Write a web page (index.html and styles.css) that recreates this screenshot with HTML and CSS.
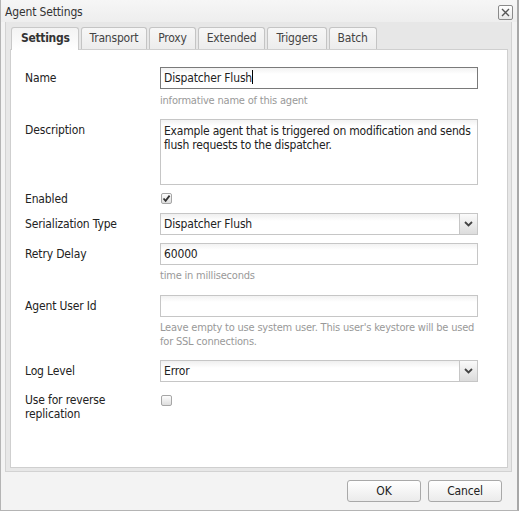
FILE: index.html
```html
<!DOCTYPE html>
<html>
<head>
<meta charset="utf-8">
<title>Agent Settings</title>
<link rel="stylesheet" href="styles.css">
</head>
<body>
<div class="dialog">
  <div class="titlebar">
    <span class="title">Agent Settings</span>
    <span class="close"><svg width="11" height="11" viewBox="0 0 11 11"><path d="M2 2 L9 9 M9 2 L2 9" stroke="#555" stroke-width="1.4"/></svg></span>
  </div>
  <div class="tabpanel">
    <div class="tabs">
      <span class="tab active">Settings</span>
      <span class="tab">Transport</span>
      <span class="tab">Proxy</span>
      <span class="tab">Extended</span>
      <span class="tab">Triggers</span>
      <span class="tab">Batch</span>
    </div>
    <div class="content">
      <div class="row r-name">
        <div class="label">Name</div>
        <div class="field">
          <div class="input focused">Dispatcher Flush<span class="caret"></span></div>
          <div class="hint">informative name of this agent</div>
        </div>
      </div>
      <div class="row r-desc">
        <div class="label">Description</div>
        <div class="field">
          <div class="textarea">Example agent that is triggered on modification and sends flush requests to the dispatcher.</div>
        </div>
      </div>
      <div class="row r-check">
        <div class="label">Enabled</div>
        <div class="field"><span class="checkbox checked"><svg width="9" height="9" viewBox="0 0 9 9"><path d="M1.5 4.5 L3.6 6.8 L7.6 1.6" stroke="#333" stroke-width="1.8" fill="none"/></svg></span></div>
      </div>
      <div class="row r-ser">
        <div class="label">Serialization Type</div>
        <div class="field">
          <div class="select"><span class="val">Dispatcher Flush</span><span class="arrow"><svg width="9" height="6" viewBox="0 0 9 6"><path d="M1 1 L4.5 4.5 L8 1" stroke="#444" stroke-width="1.8" fill="none"/></svg></span></div>
        </div>
      </div>
      <div class="row r-retry">
        <div class="label">Retry Delay</div>
        <div class="field">
          <div class="input">60000</div>
          <div class="hint">time in milliseconds</div>
        </div>
      </div>
      <div class="row r-user">
        <div class="label">Agent User Id</div>
        <div class="field">
          <div class="input"></div>
          <div class="hint">Leave empty to use system user. This user's keystore will be used for SSL connections.</div>
        </div>
      </div>
      <div class="row r-log">
        <div class="label">Log Level</div>
        <div class="field">
          <div class="select"><span class="val">Error</span><span class="arrow"><svg width="9" height="6" viewBox="0 0 9 6"><path d="M1 1 L4.5 4.5 L8 1" stroke="#444" stroke-width="1.8" fill="none"/></svg></span></div>
        </div>
      </div>
      <div class="row r-rev">
        <div class="label small-lh">Use for reverse replication</div>
        <div class="field"><span class="checkbox cb-rev"></span></div>
      </div>
    </div>
  </div>
  <div class="footer">
    <span class="btn">OK</span>
    <span class="btn">Cancel</span>
  </div>
</div>
</body>
</html>
```
FILE: styles.css
```css
html, body {
  margin: 0;
  padding: 0;
  background: #f3f3f3;
}
body {
  font-family: "DejaVu Sans Condensed", "DejaVu Sans", sans-serif;
  font-size: 12px;
  letter-spacing: -0.15px;
  color: #333;
}
.dialog {
  box-sizing: border-box;
  width: 519px;
  height: 511px;
  border: 1px solid #b4b4b4;
  border-right: 2px solid #a8a8a8;
  border-top: none;
  background: #f3f3f3;
  display: flex;
  flex-direction: column;
}
.titlebar {
  height: 22px;
  display: flex;
  align-items: center;
  justify-content: space-between;
  padding: 0 4px 0 4px;
  background: linear-gradient(#f6f6f6, #eeeeee);
}
.title {
  font-size: 12px;
  color: #333;
  position: relative;
  top: 1px;
}
.close {
  width: 13px;
  height: 13px;
  border: 1px solid #8a8a8a;
  border-radius: 2px;
  background: linear-gradient(#ffffff, #e8e8e8);
  display: flex;
  align-items: center;
  justify-content: center;
  margin-top: 2px;
}
.tabpanel {
  margin: 0 5px 0 4px;
  border: 1px solid #d2d2d2;
  border-top: none;
  background: #e7e7e7;
  padding: 0 3px 3px 4px;
  height: 450px;
  box-sizing: border-box;
  display: flex;
  flex-direction: column;
}
.tabs {
  display: flex;
  gap: 2px;
  padding: 5px 0 0 1px;
  height: 27px;
  box-sizing: border-box;
  align-items: flex-end;
}
.tab {
  box-sizing: border-box;
  height: 22px;
  line-height: 21px;
  padding: 0 8px;
  border: 1px solid #c4c4c4;
  border-bottom: none;
  border-radius: 3px 3px 0 0;
  background: linear-gradient(#f7f7f7, #ececec);
  color: #444;
  font-size: 12px;
  letter-spacing: -0.2px;
}
.tab.active {
  font-weight: bold;
  color: #333;
  background: linear-gradient(#f3f3f3, #ffffff);
  padding: 0 8px 0 9px;
  height: 23px;
  position: relative;
  top: 1px;
  border-color: #c8c8c8;
  letter-spacing: -0.3px;
}
.content {
  flex: 1;
  background: #fff;
  border: 1px solid #cfcfcf;
  padding: 17px 0 0 14px;
}
.row {
  display: grid;
  grid-template-columns: 135px 318px;
}
.label {
  line-height: 22px;
  color: #222;
}
.small-lh {
  line-height: 14px;
  padding-right: 50px;
}
.input, .textarea, .select {
  box-sizing: border-box;
  border: 1px solid #c6c6c6;
  background: linear-gradient(#f2f2f2, #ffffff 6px);
  height: 22px;
  line-height: 20px;
  padding: 0 3px;
  color: #222;
}
.input.focused {
  border-color: #7a7a7a;
}
.caret {
  display: inline-block;
  width: 1px;
  height: 14px;
  background: #000;
  vertical-align: -2px;
}
.textarea {
  height: 66px;
  line-height: 14px;
  padding: 4px 3px;
  letter-spacing: -0.2px;
}
.hint {
  margin-top: 5px;
  font-size: 11px;
  line-height: 14px;
  color: #999;
  letter-spacing: -0.2px;
}
.r-name { margin-bottom: 11px; }
.r-desc { margin-bottom: 6px; }
.r-check .label { line-height: 16px; }
.r-check { margin-bottom: 6px; }
.r-ser { margin-bottom: 8px; }
.r-retry { margin-bottom: 12px; }
.r-retry .hint { margin-top: 4px; }
.r-user .hint { margin-top: 4px; }
.r-user { margin-bottom: 11px; }
.r-log { margin-bottom: 11px; }
.checkbox {
  display: flex;
  align-items: center;
  justify-content: center;
  box-sizing: border-box;
  width: 11px;
  height: 11px;
  margin: 2px 0 0 1px;
  border: 1px solid #a6a6a6;
  border-radius: 2px;
  background: linear-gradient(#fdfdfd, #dedede);
}
.cb-rev {
  margin-top: 2px;
}
.select {
  display: flex;
  padding: 0 0 0 3px;
  background: linear-gradient(#efefef, #ffffff 7px);
}
.select .val {
  flex: 1;
}
.select .arrow {
  width: 17px;
  border-left: 1px solid #c6c6c6;
  background: linear-gradient(#fafafa, #dcdcdc);
  display: flex;
  align-items: center;
  justify-content: center;
}
.footer {
  flex: 1;
  display: flex;
  justify-content: flex-end;
  gap: 7px;
  padding: 8px 15px 0 0;
}
.btn {
  box-sizing: border-box;
  width: 74px;
  height: 22px;
  line-height: 20px;
  text-align: center;
  border: 1px solid #a9a9a9;
  border-radius: 3px;
  background: linear-gradient(#ffffff, #ebebeb);
  color: #222;
}
```
